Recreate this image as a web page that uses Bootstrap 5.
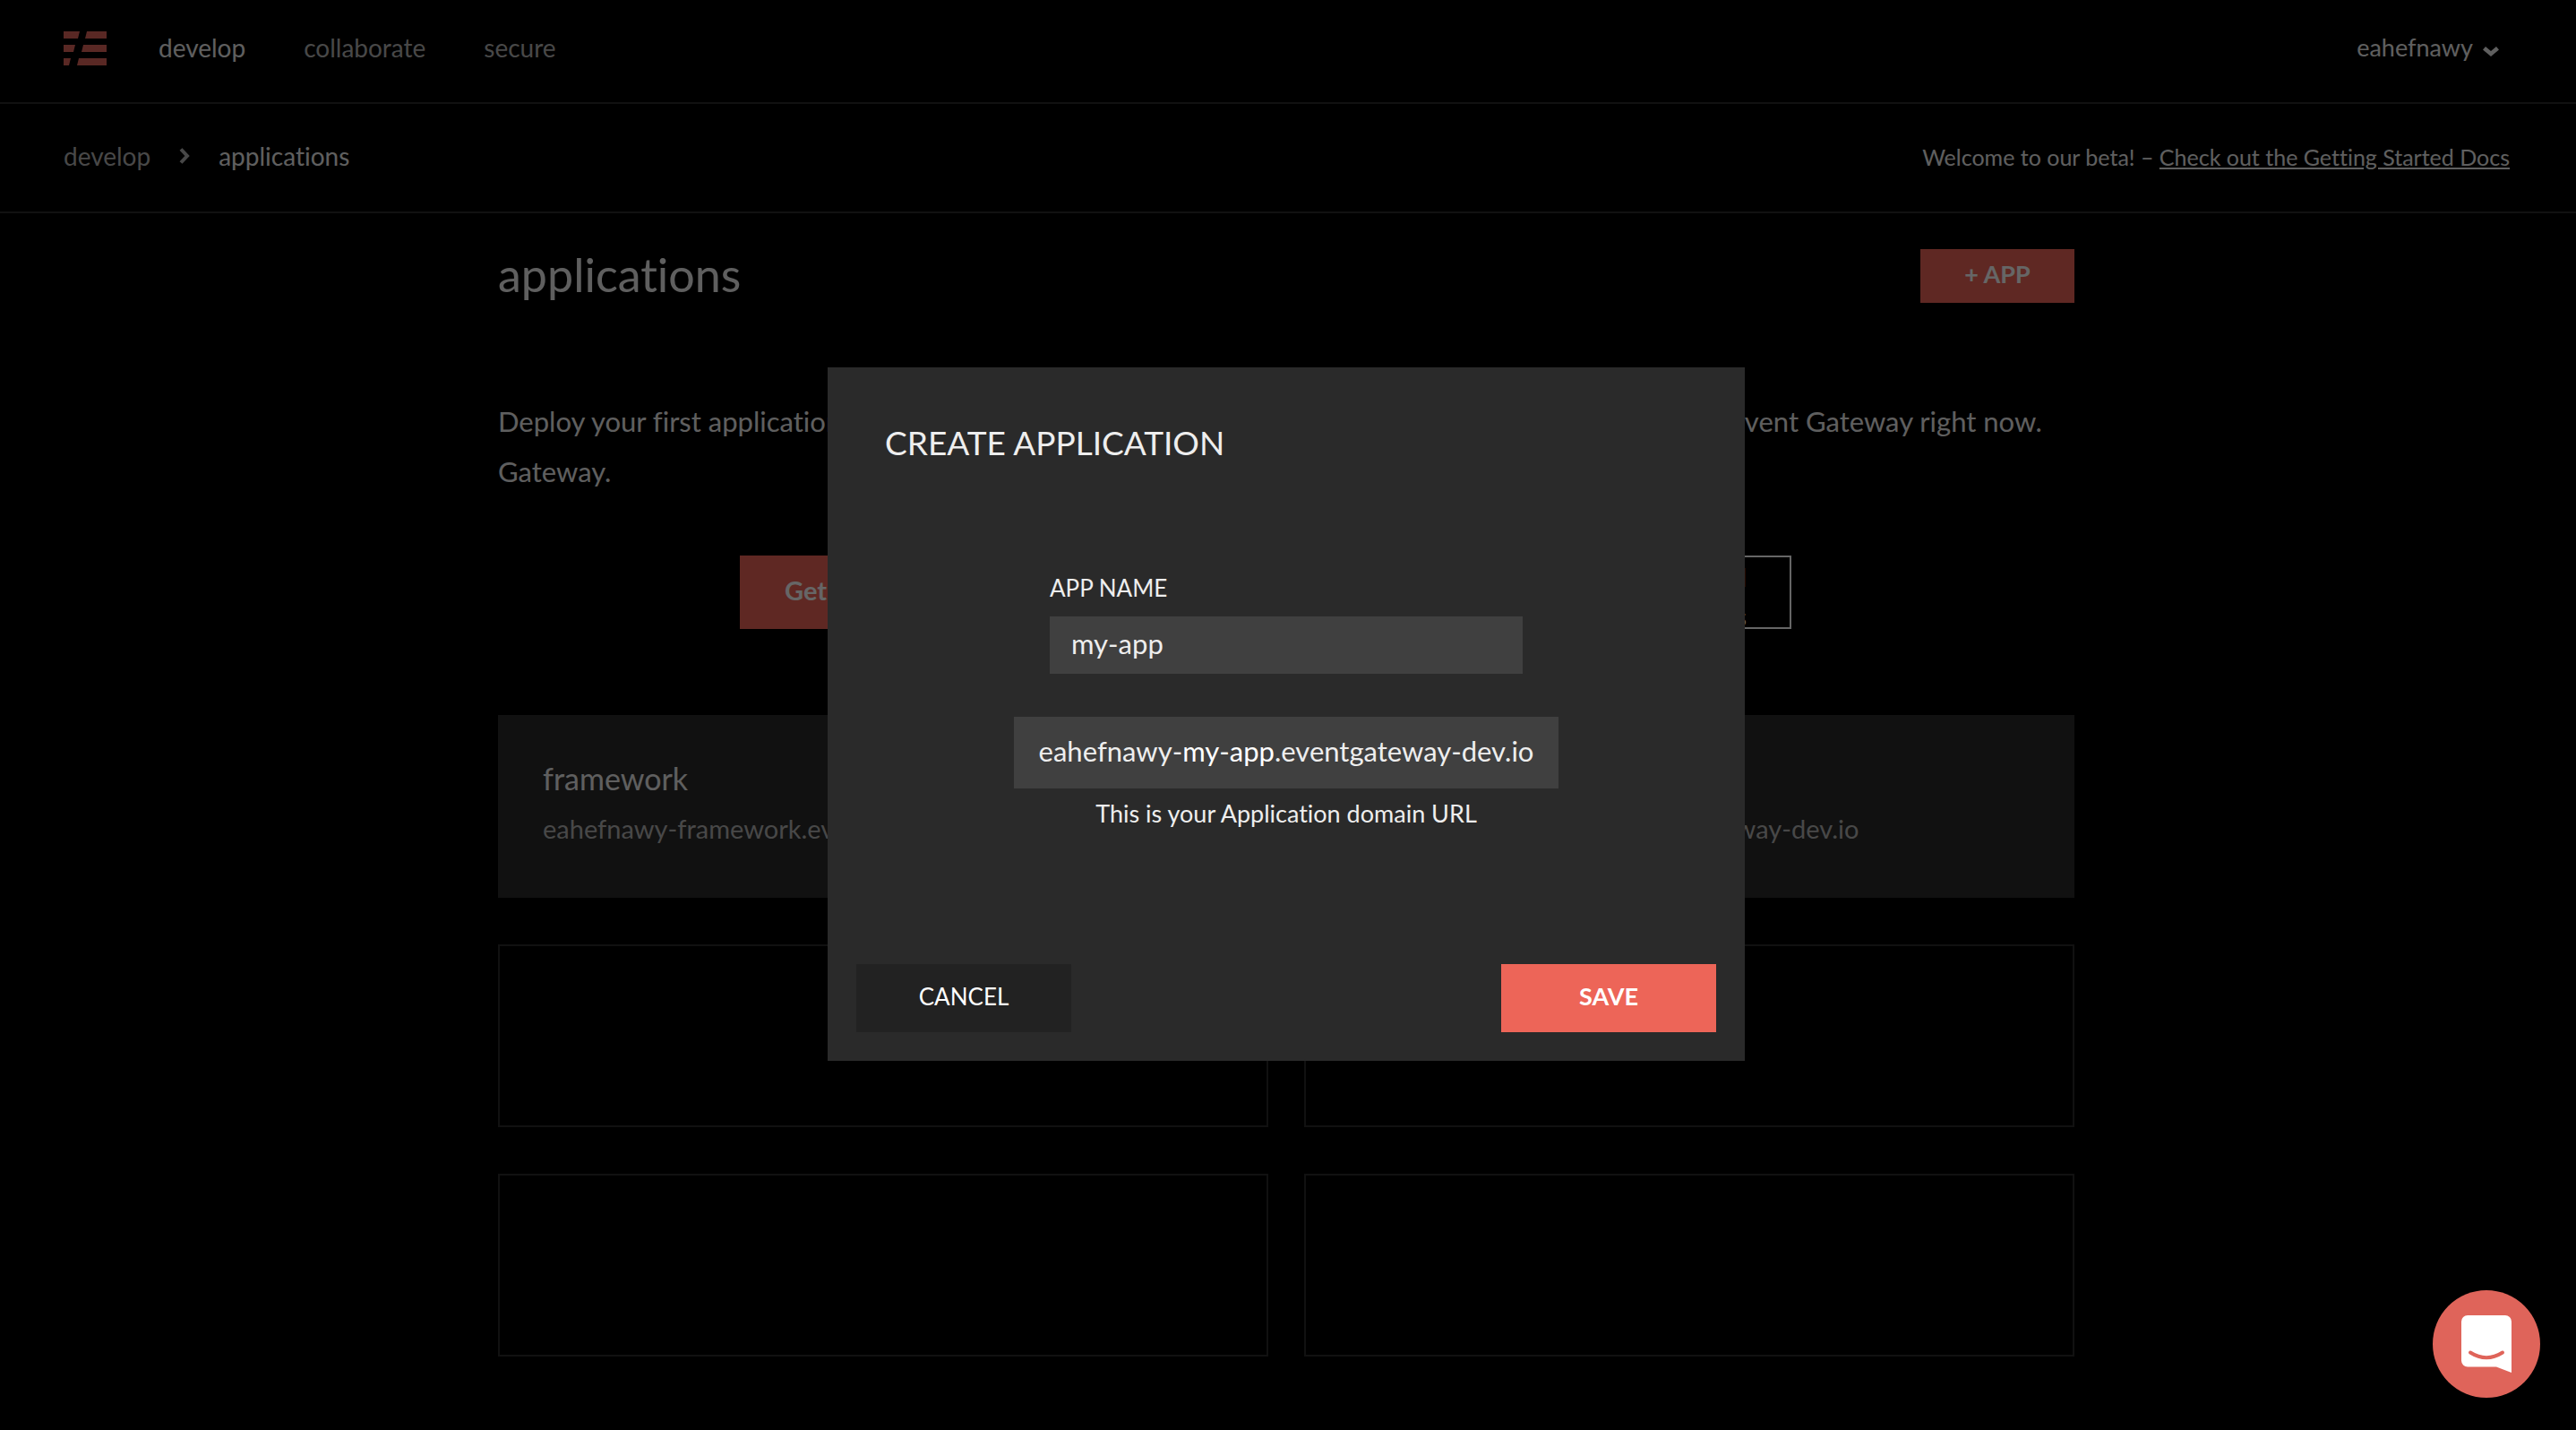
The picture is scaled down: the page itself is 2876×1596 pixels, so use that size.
<!DOCTYPE html>
<html lang="en">
<head>
<meta charset="utf-8">
<meta name="viewport" content="width=device-width, initial-scale=1">
<title>applications</title>
<link href="https://cdn.jsdelivr.net/npm/bootstrap@5.3.0/dist/css/bootstrap.min.css" rel="stylesheet">
<style>
  :root { --accent: #ed6558; --soft: #eee; --faint: #b4b4b4; --line: #2b2b2b; }
  body { background: #000; color: var(--soft); font-family: Lato, "Open Sans", sans-serif; font-size: 27px; line-height: 34px; font-variant-ligatures: none; padding-right: 4px; }
  a { color: inherit; }
  .topbar, .crumbbar { border-bottom: 2px solid var(--line); margin-right: -4px; padding: 0 74px 0 71px; }
  .topbar { padding-top: 35px; height: 116px; }
  .crumbbar { padding-top: 41px; height: 122px; font-size: 28px; }
  .brand { margin-right: 58px; }
  .brand svg, .caret-icon, .crumb-arrow { display: block; }
  .main-links { gap: 65px; font-size: 28px; line-height: 36px; }
  .faint { color: var(--faint); }
  .user-menu { gap: 11px; padding-right: 12px; line-height: 36px; }
  .caret-icon { margin-top: 17px; }
  .crumbs { gap: 32px; }
  .welcome { font-size: 25px; }
  .page-wrap { width: 100%; max-width: 1760px; padding-top: 40px; padding-bottom: 40px; }
  .page-title { font-size: 52px; line-height: 56px; }
  .btn { --bs-btn-border-radius: 0; border: 0; border-radius: 0; color: #fff; font-family: inherit; }
  .btn-accent, .btn-accent:hover { background: var(--accent); font-weight: 700; color: #fff; }
  .btn-app { min-width: 172px; height: 60px; font-size: 27px; padding: 0 0 4px; }
  .intro { margin-top: 104px; column-gap: 40px; }
  .intro p { font-size: 31px; line-height: 56px; margin-bottom: 66px; min-height: 112px; }
  .split > * { flex: 1 1 0; min-width: 0; }
  .btn-intro { height: 82px; font-size: 29px; padding: 0 50px 4px; }
  .btn-start { width: 320px; text-align: left; }
  .btn-docs { width: 228px; border: 2px solid #fff; text-align: right; padding: 0 48px 4px; }
  .app-grid { display: grid; grid-template-columns: 1fr 1fr; gap: 52px 40px; margin-top: 96px; }
  .app-tile { min-height: 204px; padding: 51px 50px 0; text-decoration: none; }
  .app-filled { background: var(--line); }
  .app-empty { border: 2px solid var(--line); }
  .app-tile h2 { font-size: 34px; line-height: 40px; margin-bottom: 16px; }
  .app-tile p { font-size: 29px; line-height: 40px; margin: 0; color: var(--faint); }
  .shade { background: rgba(0, 0, 0, .6); padding: 0 4px 2px 0; }
  .modal-dialog { max-width: 1024px; }
  .modal-content { background: #2a2a2a; color: var(--soft); border: 0; border-radius: 0; padding: 62px 32px 32px; }
  .dialog-title { font-size: 37px; line-height: 44px; margin: 0 32px 124px; }
  .field { width: 528px; max-width: 100%; margin-bottom: 48px; }
  .field label { font-size: 26px; line-height: 32px; margin-bottom: 16px; display: block; }
  .field .form-control { height: 64px; border: 0; border-radius: 0; background: #404040; color: var(--soft); font-size: 31px; padding: 0 24px 4px; }
  .domain-url { background: #404040; font-size: 31px; line-height: 76px; padding: 0 24px 4px; width: 608px; max-width: 100%; text-align: center; }
  .domain-url span { color: #fff; }
  .domain-help { font-size: 27px; line-height: 36px; margin: 10px 0 150px; }
  .btn-dialog { width: 240px; height: 76px; font-size: 27px; padding: 0 0 4px; }
  .btn-cancel, .btn-cancel:hover { background: #222; color: #fff; font-size: 26px; }
  .chat-launcher { position: fixed; right: 40px; bottom: 36px; z-index: 1080; width: 120px; height: 120px; border: 0; padding: 0; background: #df645a; }
  .chat-launcher svg { display: block; }
</style>
</head>
<body>
<header>
  <nav class="topbar d-flex align-items-start" aria-label="Main">
    <a class="brand" href="#" aria-label="Home">
      <svg width="48" height="38" viewBox="0 0 48 38" fill="#df645a">
        <path d="M0 0H18L16 8H0ZM26 0H48V8H24ZM0 15H13L11 23H0ZM22 15H48V23H20ZM0 30H8L6 38H0ZM17 30H48V38H15Z"/>
      </svg>
    </a>
    <div class="main-links d-flex">
      <a class="text-decoration-none" href="#">develop</a>
      <a class="text-decoration-none faint" href="#">collaborate</a>
      <a class="text-decoration-none faint" href="#">secure</a>
    </div>
    <a class="user-menu d-flex ms-auto text-decoration-none" href="#">eahefnawy
      <svg class="caret-icon" width="18" height="11" viewBox="0 0 18 11" fill="currentColor"><path d="M3 0L9 5L15 0L18 3.500L9 11L0 3.500Z"/></svg>
    </a>
  </nav>
  <div class="crumbbar d-flex align-items-baseline justify-content-between">
    <nav class="crumbs d-flex align-items-center" aria-label="Breadcrumb">
      <a class="text-decoration-none faint" href="#">develop</a>
      <svg class="crumb-arrow faint" width="12" height="18" viewBox="0 0 12 18" fill="none" stroke="currentColor" stroke-width="4"><path d="M2 1.500L9 9L2 16.500"/></svg>
      <span>applications</span>
    </nav>
    <div class="welcome">Welcome to our beta! – <a href="#">Check out the Getting Started Docs</a></div>
  </div>
</header>

<main class="page-wrap mx-auto">
  <div class="d-flex justify-content-between align-items-start">
    <h1 class="page-title mb-0 fw-normal">applications</h1>
    <button class="btn btn-accent btn-app" type="button">+ APP</button>
  </div>

  <div class="intro split d-flex">
    <section class="d-flex flex-column">
      <p>Deploy your first application using the Serverless Event Gateway.</p>
      <button class="btn btn-accent btn-intro btn-start align-self-center" type="button">Get Started</button>
    </section>
    <section class="d-flex flex-column">
      <p>Learn how to start coding with the Event Gateway right now.</p>
      <button class="btn btn-intro btn-docs align-self-center" type="button">Read Docs</button>
    </section>
  </div>

  <div class="app-grid">
    <a class="app-tile app-filled" href="#"><h2 class="fw-normal">framework</h2><p>eahefnawy-framework.eventgateway-dev.io</p></a>
    <a class="app-tile app-filled" href="#"><h2 class="fw-normal">my-website</h2><p>eahefnawy-my-website.eventgateway-dev.io</p></a>
    <div class="app-tile app-empty"></div>
    <div class="app-tile app-empty"></div>
    <div class="app-tile app-empty"></div>
    <div class="app-tile app-empty"></div>
  </div>
</main>

<div class="modal d-block shade" role="dialog" aria-modal="true" aria-labelledby="dialogTitle">
  <div class="modal-dialog modal-dialog-centered">
    <form class="modal-content">
      <h2 class="dialog-title fw-normal" id="dialogTitle">CREATE APPLICATION</h2>
      <div class="d-flex flex-column align-items-center">
        <div class="field">
          <label for="appName">APP NAME</label>
          <input class="form-control" id="appName" type="text" value="my-app">
        </div>
        <div class="domain-url">eahefnawy-<span>my-app</span>.eventgateway-dev.io</div>
        <p class="domain-help">This is your Application domain URL</p>
      </div>
      <div class="d-flex justify-content-between">
        <button class="btn btn-dialog btn-cancel" type="button">CANCEL</button>
        <button class="btn btn-dialog btn-accent" type="button">SAVE</button>
      </div>
    </form>
  </div>
</div>

<button class="chat-launcher rounded-circle" type="button" aria-label="Open chat">
  <svg width="120" height="120" viewBox="0 0 120 120">
    <path fill="#fff" d="M39 28H81A7 7 0 0 1 88 35V92L71 85.500H39A7 7 0 0 1 32 78.500V35A7 7 0 0 1 39 28Z"/>
    <path fill="none" stroke="#df645a" stroke-width="4" stroke-linecap="round" d="M42 69.500Q60 81 78 69.500"/>
  </svg>
</button>
<script src="https://cdn.jsdelivr.net/npm/bootstrap@5.3.0/dist/js/bootstrap.bundle.min.js"></script>
</body>
</html>
